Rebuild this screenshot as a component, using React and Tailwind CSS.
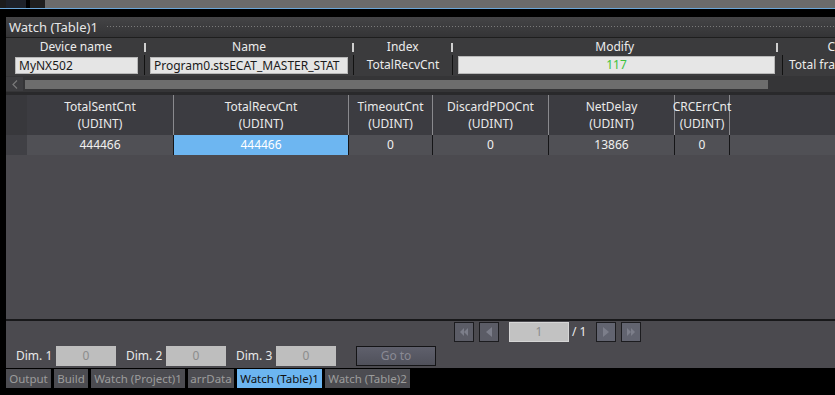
import React from "react";

// ---------------------------------------------
// Watch table data
// ---------------------------------------------
const columns = [
  { name: "TotalSentCnt", value: "444466", w: "w-[147px]" },
  { name: "TotalRecvCnt", value: "444466", w: "w-[175px]", selected: true },
  { name: "TimeoutCnt", value: "0", w: "w-[84px]" },
  { name: "DiscardPDOCnt", value: "0", w: "w-[116px]" },
  { name: "NetDelay", value: "13866", w: "w-[126px]" },
  { name: "CRCErrCnt", value: "0", w: "w-[55px]" },
];

const tabs = [
  { label: "Output", w: "w-[45px]" },
  { label: "Build", w: "w-[34px]" },
  { label: "Watch (Project)1", w: "w-[94px]" },
  { label: "arrData", w: "w-[46px]" },
  { label: "Watch (Table)1", w: "w-[85px]", active: true },
  { label: "Watch (Table)2", w: "w-[85px]" },
];

const PagerButton = ({ children, dim }) => (
  <div
    className={`w-[20px] h-[20px] border border-[#1c1c1f] flex items-center justify-center ${
      dim ? "bg-[#5b5c66]" : "bg-[#626470]"
    }`}
  >
    {children}
  </div>
);

const DimField = ({ label }) => (
  <div className="flex items-center">
    <span className="w-[40px] text-[12px] text-[#e8e8e8]">{label}</span>
    <div className="w-[60px] h-[20px] bg-[#bebebe] text-[#8c8c8c] text-[12px] flex items-center justify-center">
      0
    </div>
  </div>
);

const App = () => {
  return (
    <div
      className="w-[835px] h-[395px] bg-black overflow-hidden flex flex-col"
      style={{ fontFamily: '"Noto Sans", "Open Sans", sans-serif' }}
    >
      {/* Top strip */}
      <div className="h-[9px] flex border-b border-[#6aa6d8]">
        <div className="w-[6px] bg-[#1c1c1c]" />
        <div className="w-[20px] bg-[#1d2129]" />
        <div className="w-[4px] bg-black" />
        <div className="w-[15px] bg-[#1f1f1f]" />
        <div className="flex-1 bg-[#6b6b6b]" />
      </div>
      <div className="h-[8px]" />

      <div className="flex-1 flex flex-col ml-[6px]">
        {/* Title bar */}
        <div className="h-[21px] flex items-center bg-gradient-to-b from-[#444446] to-[#343436] border-b border-[#1e1e1e]">
          <span className="pl-[3px] pr-[8px] text-[13px] text-[#e6e6e6] leading-none">
            Watch (Table)1
          </span>
          <div className="flex-1 h-[4px] bg-[radial-gradient(circle,#7a7a7a_0.7px,transparent_0.9px)] bg-[length:3px_3px]" />
        </div>

        {/* Property table */}
        <div className="bg-[#3b3b3d] flex flex-col">
          <div className="h-[16px] pt-[2px] flex items-center text-[12px] text-[#ececec] leading-none whitespace-nowrap">
            <div className="w-[138px] pl-[2px] text-center">Device name</div>
            <div className="w-[2px] h-[9px] bg-[#cfcfcf]" />
            <div className="w-[207px] text-center">Name</div>
            <div className="w-[2px] h-[9px] bg-[#cfcfcf]" />
            <div className="w-[97px] text-center">Index</div>
            <div className="w-[2px] h-[9px] bg-[#cfcfcf]" />
            <div className="w-[324px] text-center">Modify</div>
            <div className="w-[2px] h-[9px] bg-[#cfcfcf]" />
            <div className="flex-1 pl-[49px]">C</div>
          </div>
          <div className="h-[22px] flex items-center text-[12px]">
            <div className="w-[138px] flex items-center pl-[9px] pr-[1px]">
              <div className="w-[123px] h-[17px] bg-[#e5e5e5] border border-[#b8b8b8] text-[#1a1a1a] pl-[3px] leading-[15px]">
                MyNX502
              </div>
            </div>
            <div className="w-[1px] h-[20px] bg-[#121212]" />
            <div className="w-[208px] flex items-center pl-[5px]">
              <div className="w-[198px] h-[17px] bg-[#e5e5e5] border border-[#b8b8b8] text-[#1a1a1a] pl-[3px] leading-[15px] whitespace-nowrap">
                Program0.stsECAT_MASTER_STAT
              </div>
            </div>
            <div className="w-[1px] h-[20px] bg-[#121212]" />
            <div className="w-[98px] text-center text-[#ececec]">TotalRecvCnt</div>
            <div className="w-[1px] h-[20px] bg-[#121212]" />
            <div className="w-[329px] flex items-center pl-[5px]">
              <div className="w-[317px] h-[18px] bg-[#e6e6e6] border border-[#b8b8b8] text-[#3cc23c] text-center leading-[16px]">
                117
              </div>
            </div>
            <div className="w-[1px] h-[20px] bg-[#121212]" />
            <div className="flex-1 pl-[6px] text-[#ececec] whitespace-nowrap overflow-hidden">
              Total fran
            </div>
          </div>
          {/* Horizontal scroll bar */}
          <div className="h-[16px] flex items-center bg-[#353537]">
            <div className="w-[17px] h-[14px] flex items-center justify-center bg-[#3d3d40]">
              <svg width="6" height="9" viewBox="0 0 6 9">
                <path d="M5 0.5 L1 4.5 L5 8.5" stroke="#7a7a7a" strokeWidth="1.2" fill="none" />
              </svg>
            </div>
            <div className="ml-[2px] w-[743px] h-[9px] bg-[#6d6d6d]" />
          </div>
          <div className="h-[3px] bg-[#29292b]" />
        </div>

        {/* Grid */}
        <div className="flex flex-col bg-[#4b4a4f] flex-1">
          <div className="h-[40px] flex bg-[#3c3c41] text-[12px] text-[#eaeaea] leading-[17px]">
            <div className="w-[21px] bg-[#38383c]" />
            {columns.map((c) => (
              <div
                key={c.name}
                className={`${c.w} flex flex-col items-center justify-center border-r border-[#8a8a8e] whitespace-nowrap`}
              >
                <span>{c.name}</span>
                <span>(UDINT)</span>
              </div>
            ))}
            <div className="flex-1" />
          </div>
          <div className="h-[20px] flex bg-[#505055] text-[12px] text-[#f0f0f0] leading-[20px]">
            <div className="w-[21px] bg-[#404045]" />
            {columns.map((c) => (
              <div
                key={c.name}
                className={`${c.w} text-center border-r border-[#151517] ${
                  c.selected ? "bg-[#6db6f1] text-white" : ""
                }`}
              >
                {c.value}
              </div>
            ))}
            <div className="flex-1" />
          </div>
          <div className="flex-1" />
        </div>

        {/* Pager + dims */}
        <div className="h-[49px] bg-[#4b4a4f] border-t-2 border-[#18181a] flex flex-col">
          <div className="h-[21px] flex items-center pl-[448px] text-[12px]">
            <PagerButton dim>
              <svg width="10" height="8" viewBox="0 0 10 8">
                <path d="M5 0 L1 4 L5 8 Z M9 0 L5 4 L9 8 Z" fill="#7c7e8a" />
              </svg>
            </PagerButton>
            <div className="w-[5px]" />
            <PagerButton dim>
              <svg width="8" height="10" viewBox="0 0 8 10">
                <path d="M7 0 L1 5 L7 10 Z" fill="#7c7e8a" />
              </svg>
            </PagerButton>
            <div className="ml-[10px] w-[60px] h-[20px] bg-[#c2c2c2] border border-[#d6d6d6] text-[#8c8c8c] flex items-center justify-center">
              1
            </div>
            <span className="ml-[3px] w-[24px] text-[#eeeeee]">/ 1</span>
            <PagerButton>
              <svg width="8" height="10" viewBox="0 0 8 10">
                <path d="M1 0 L7 5 L1 10 Z" fill="#7c7e8a" />
              </svg>
            </PagerButton>
            <div className="w-[5px]" />
            <PagerButton>
              <svg width="10" height="8" viewBox="0 0 10 8">
                <path d="M1 0 L5 4 L1 8 Z M5 0 L9 4 L5 8 Z" fill="#7c7e8a" />
              </svg>
            </PagerButton>
          </div>
          <div className="h-[20px] mt-[4px] flex items-center pl-[10px] gap-[10px]">
            <DimField label="Dim. 1" />
            <DimField label="Dim. 2" />
            <DimField label="Dim. 3" />
            <div className="ml-[10px] w-[80px] h-[20px] border border-[#141416] bg-gradient-to-b from-[#5f606c] to-[#50515b] text-[#8a8a94] text-[12px] flex items-center justify-center">
              Go to
            </div>
          </div>
        </div>

        {/* Tabs */}
        <div className="h-[27px] bg-black pt-[1px]">
          <div className="h-[19px] flex gap-[3px] text-[11.5px] whitespace-nowrap">
            {tabs.map((t) => (
              <div
                key={t.label}
                className={`${t.w} flex items-center justify-center ${
                  t.active ? "bg-[#6cb5f0] text-[#111]" : "bg-[#4c4c51] text-[#9c9c9c]"
                }`}
              >
                {t.label}
              </div>
            ))}
          </div>
        </div>
      </div>
    </div>
  );
};

export default App;
